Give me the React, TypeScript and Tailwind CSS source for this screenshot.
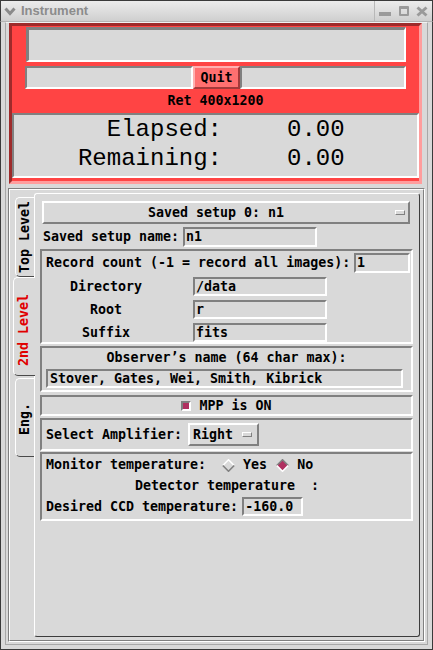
import React from 'react';

const sunken = 'border-2 border-t-[#808080] border-l-[#808080] border-b-white border-r-white';
const raised = 'border-2 border-t-white border-l-white border-b-[#808080] border-r-[#808080]';

const Entry: React.FC<{ value: string; className: string }> = ({ value, className }) => (
  <div className={`${sunken} bg-[#d9d9d9] flex items-center pl-[1px] whitespace-pre shrink-0 ${className}`}>{value}</div>
);

const Indicator: React.FC<{ className: string }> = ({ className }) => (
  <div className={`w-[10px] h-[5px] border border-t-white border-l-white border-b-[#808080] border-r-[#808080] bg-[#d9d9d9] shrink-0 ${className}`} />
);

const Diamond: React.FC<{ on?: boolean }> = ({ on }) => (
  <svg width="13" height="13" viewBox="0 0 13 13" className="shrink-0">
    <polygon points="6.5,0.5 12.5,6.5 6.5,12.5 0.5,6.5" fill={on ? '#b03060' : '#d9d9d9'} />
    <polyline points="0.8,6.5 6.5,0.8 12.2,6.5" fill="none" stroke={on ? '#808080' : '#ffffff'} strokeWidth="1.6" />
    <polyline points="0.8,6.5 6.5,12.2 12.2,6.5" fill="none" stroke={on ? '#ffffff' : '#808080'} strokeWidth="1.6" />
  </svg>
);

const Tab: React.FC<{ label: string; className: string; textClass?: string }> = ({ label, className, textClass = '' }) => (
  <div
    className={`flex items-center justify-center bg-[#d9d9d9] border-l border-t border-b border-l-white border-t-white border-b-[#4a4a4a] rounded-l-[5px] ${className}`}
  >
    <span className={`[writing-mode:vertical-rl] rotate-180 whitespace-pre ${textClass}`}>{label}</span>
  </div>
);

export default function App() {
  return (
    <div className="w-[433px] h-[650px] bg-[#d9d9d9] flex flex-col overflow-hidden font-['DejaVu_Sans_Mono',monospace] font-bold text-[13.3px] text-black">
      {/* title bar */}
      <div className="h-[22px] shrink-0 flex items-center bg-linear-to-b from-[#ececec] to-[#cfcfcf] border-t border-l border-r border-b border-t-[#3a3a3a] border-l-[#3a3a3a] border-r-[#3a3a3a] border-b-[#b4b4b4]">
        <svg width="12" height="9" viewBox="0 0 12 9" className="ml-[3px]">
          <polyline points="1.5,1.5 6,6.5 10.5,1.5" fill="none" stroke="#8a8a8a" strokeWidth="3" />
        </svg>
        <span className="ml-[5px] font-['Liberation_Sans',sans-serif] font-bold text-[13px] text-[#8c8c8c]">Instrument</span>
        <div className="flex-1" />
        <div className="w-[58px] h-full flex items-center border-l border-l-[#b8b8b8]">
          <div className="ml-[4px] mt-[5px] w-[12px] h-[4px] bg-[#9a9a9a]" />
          <div className="ml-[8px] w-[10px] h-[10px] border-2 border-t-[3px] border-[#9a9a9a] rounded-[1px]" />
          <svg width="12" height="11" viewBox="0 0 12 11" className="ml-[7px]">
            <path d="M1.5 1.5 L10.5 9.5 M10.5 1.5 L1.5 9.5" stroke="#9a9a9a" strokeWidth="3" />
          </svg>
        </div>
      </div>

      {/* body */}
      <div className="flex-1 flex flex-col border-l border-r border-b border-l-[#3a3a3a] border-r-[#3a3a3a] border-b-[#3a3a3a] px-[4px] pb-[4px]">
        <div className="flex-1 flex flex-col border-l border-r border-b border-t border-l-[#a8a8a8] border-t-[#f2f2f2] border-r-[#a8a8a8] border-b-[#a8a8a8] px-[2px] pb-[2px]">
          {/* red status panel */}
          <div className="ml-[1px] w-[413px] h-[161px] shrink-0 flex flex-col bg-[#ff4444] border-[3px] border-t-[#9e2b2b] border-l-[#9e2b2b] border-b-[#ff9d9d] border-r-[#ff9d9d]">
            <div className={`${sunken} border-t-[3px] border-l-[3px] ml-[14px] mt-[1px] w-[380px] h-[35px] bg-[#d9d9d9]`} />
            <div className="ml-[13px] mt-[4px] h-[23px] flex">
              <div className={`${sunken} w-[168px] h-full bg-[#d9d9d9]`} />
              <div className="w-[47px] h-full flex items-center justify-center bg-[#ff7070] border-2 border-t-[#ffb0b0] border-l-[#ffb0b0] border-b-[#a33a3a] border-r-[#a33a3a]">
                Quit
              </div>
              <div className={`${sunken} w-[166px] h-full bg-[#d9d9d9]`} />
            </div>
            <div className="h-[24px] flex items-center justify-center">Ret 400x1200</div>
            <div className={`${sunken} h-[65px] bg-[#d9d9d9] grid grid-cols-[208px_1fr] gap-x-[65px] content-start font-['Liberation_Mono',monospace] font-normal text-[24px] leading-[29px]`}>
              <div className="text-right">Elapsed:</div>
              <div>0.00</div>
              <div className="text-right">Remaining:</div>
              <div>0.00</div>
            </div>
          </div>

          {/* notebook */}
          <div className="mt-[4px] flex-1 flex border border-t-[#808080] border-l-[#808080] border-b-white border-r-white">
            <div className="flex-1 flex border border-t-white border-l-white border-b-[#808080] border-r-[#808080]">
              <div className="w-[24px] shrink-0 flex flex-col items-end pt-[7px]">
                <Tab label="Top Level" className="w-[19px] h-[80px]" textClass="pb-[1px]" />
                <Tab label="2nd Level" className="relative z-10 -mr-[1px] w-[22px] h-[99px] pr-[1px]" textClass="text-[#e00000] pb-[8px]" />
                <Tab label="Eng." className="mt-[2px] w-[19px] h-[79px]" textClass="pb-[4px]" />
              </div>

              <div className="w-[386px] mt-[3px] mb-[3px] flex flex-col border border-t-white border-l-white border-b-[#3d3d3d] border-r-[#3d3d3d] rounded-[3px]">
                {/* saved setup menubutton */}
                <div className={`${raised} ml-[7px] mt-[7px] w-[368px] h-[23px] flex items-center`}>
                  <span className="flex-1 text-center pr-[2px]">Saved setup 0: n1</span>
                  <Indicator className="ml-[5px] mr-[3px]" />
                </div>

                <div className="mt-[3px] h-[20px] flex items-center">
                  <span className="ml-[8px] w-[140px]">Saved setup name:</span>
                  <Entry value="n1" className="w-[134px] h-[20px]" />
                </div>

                {/* record frame */}
                <div className={`${sunken} mt-[2px] ml-[5px] w-[373px] h-[95px] flex flex-col`}>
                  <div className="mt-[2px] h-[20px] flex items-center">
                    <span className="pl-[4px] w-[312px] whitespace-pre">Record count (-1 = record all images):</span>
                    <Entry value="1" className="w-[56px] h-[20px]" />
                  </div>
                  <div className="mt-[4px] h-[19px] flex items-center">
                    <span className="ml-[4px] w-[120px] text-center">Directory</span>
                    <Entry value="/data" className="ml-[27px] w-[134px] h-[19px]" />
                  </div>
                  <div className="mt-[4px] h-[19px] flex items-center">
                    <span className="ml-[4px] w-[120px] text-center">Root</span>
                    <Entry value="r" className="ml-[27px] w-[134px] h-[19px]" />
                  </div>
                  <div className="mt-[4px] h-[19px] flex items-center">
                    <span className="ml-[4px] w-[120px] text-center">Suffix</span>
                    <Entry value="fits" className="ml-[27px] w-[134px] h-[19px]" />
                  </div>
                </div>

                {/* observer frame */}
                <div className={`${sunken} mt-[2px] ml-[5px] w-[373px] h-[46px] flex flex-col`}>
                  <div className="h-[19px] flex items-center justify-center">Observer’s name (64 char max):</div>
                  <Entry value="Stover, Gates, Wei, Smith, Kibrick" className="mt-[2px] ml-[4px] w-[357px] h-[19px] pl-[2px]" />
                </div>

                {/* MPP frame */}
                <div className={`${sunken} mt-[3px] ml-[5px] w-[373px] h-[21px] flex items-center justify-center gap-[8px]`}>
                  <div className={`${sunken} w-[10px] h-[10px] bg-[#b03060]`} />
                  <span>MPP is ON</span>
                </div>

                {/* amplifier frame */}
                <div className={`${sunken} mt-[2px] ml-[5px] w-[373px] h-[33px] flex items-center`}>
                  <span className="pl-[4px]">Select Amplifier:</span>
                  <div className={`${raised} ml-[6px] w-[71px] h-[23px] flex items-center pl-[3px]`}>
                    <span>Right</span>
                    <Indicator className="ml-[9px]" />
                  </div>
                </div>

                {/* monitor frame */}
                <div className={`${sunken} mt-[1px] ml-[5px] w-[373px] h-[69px] flex flex-col`}>
                  <div className="h-[22px] flex items-center pl-[4px]">
                    <span>Monitor temperature:</span>
                    <span className="ml-[16px] flex"><Diamond /></span>
                    <span className="ml-[8px]">Yes</span>
                    <span className="ml-[9px] flex"><Diamond on /></span>
                    <span className="ml-[8px]">No</span>
                  </div>
                  <div className="h-[20px] flex items-center pl-[93px] whitespace-pre">Detector temperature  :</div>
                  <div className="mt-[1px] h-[19px] flex items-center pl-[4px]">
                    <span>Desired CCD temperature:</span>
                    <Entry value="-160.0" className="ml-[4px] w-[61px] h-[19px]" />
                  </div>
                </div>
              </div>
            </div>
          </div>
        </div>
      </div>
    </div>
  );
}
